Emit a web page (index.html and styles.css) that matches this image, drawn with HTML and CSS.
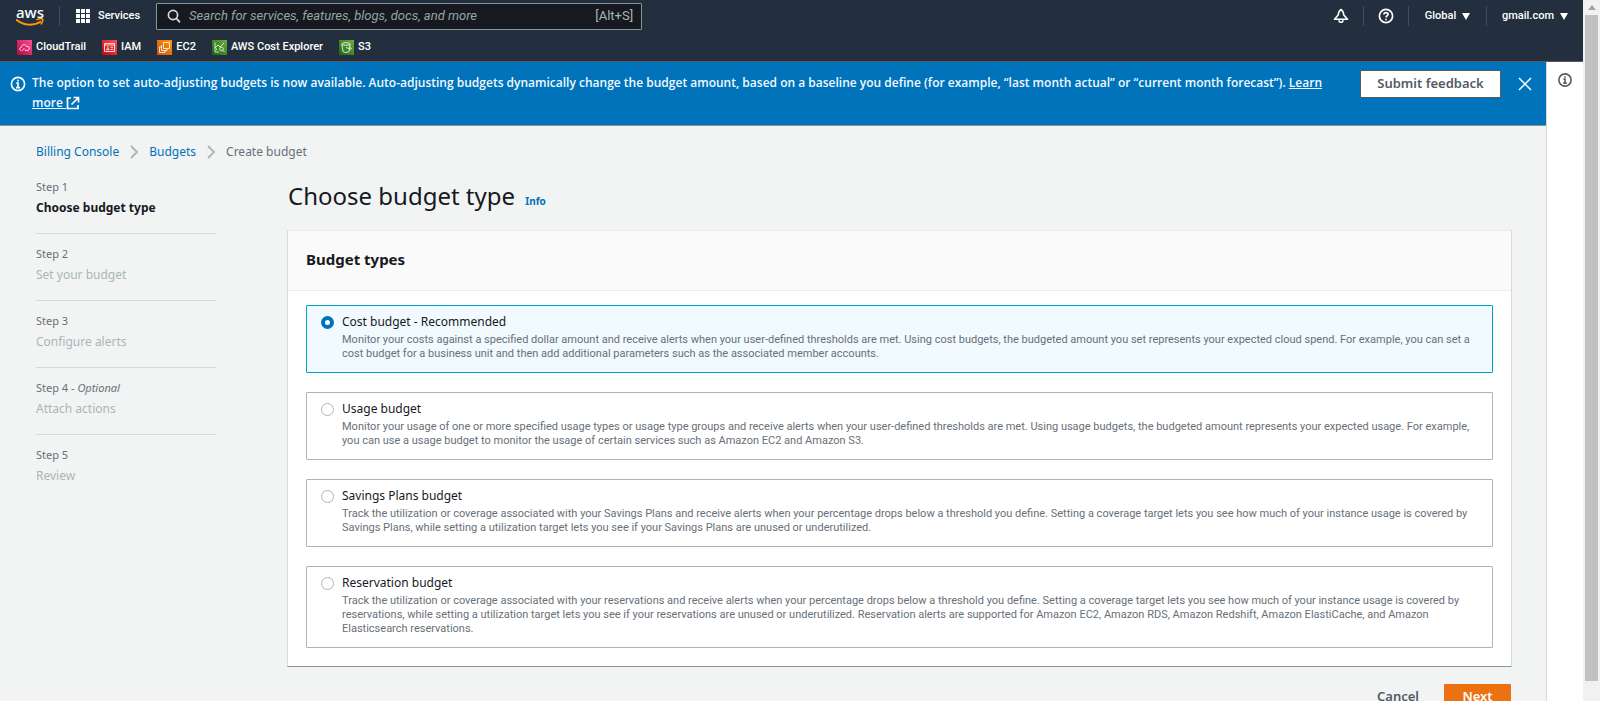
FILE: index.html
```
<!DOCTYPE html>
<html lang="en">
<head>
<meta charset="utf-8">
<title>Create budget</title>
<link rel="stylesheet" href="styles.css">
</head>
<body>
<div class="page">
  <header class="topbar">
    <div class="topbar-row">
      <a class="logo" href="#" aria-label="AWS home">
        <span class="logo-word">aws</span>
        <svg class="logo-smile" viewBox="0 0 28 9" width="28" height="9" aria-hidden="true"><path d="M0 1.500C8 8 18 8 25 3.500" fill="none" stroke="#f90" stroke-width="2"/><path d="M20.500 2c3-1.600 5.500-1.400 6-.8s0 3-1.600 5.300" fill="none" stroke="#f90" stroke-width="1.600"/></svg>
      </a>
      <button class="services" type="button">
        <svg width="14" height="14" viewBox="0 0 14 14" fill="#fff" aria-hidden="true"><path d="M0 0h4v4H0zM5 0h4v4H5zM10 0h4v4h-4zM0 5h4v4H0zM5 5h4v4H5zM10 5h4v4h-4zM0 10h4v4H0zM5 10h4v4H5zM10 10h4v4h-4z"/></svg>
        Services
      </button>
      <label class="search">
        <svg width="14" height="14" viewBox="0 0 14 14" fill="none" stroke="#d5dbdb" stroke-width="1.700" aria-hidden="true"><circle cx="6" cy="6" r="4.600"/><path d="M9.300 9.300l3.700 4"/></svg>
        <input type="search" placeholder="Search for services, features, blogs, docs, and more" aria-label="Search">
        <span class="shortcut">[Alt+S]</span>
      </label>
      <nav class="tools">
        <button type="button" aria-label="Notifications"><svg width="16" height="16" viewBox="0 0 16 16" fill="none" stroke="#fff" stroke-width="1.600" stroke-linejoin="round" aria-hidden="true"><path d="M8 1.500C6 2.500 5.500 4.500 5.200 7L1.500 11.300h13L10.800 7C10.500 4.500 10 2.500 8 1.500z"/><path d="M6 12.200a2 2 0 0 0 4 0"/></svg></button>
        <button type="button" aria-label="Help"><svg width="16" height="16" viewBox="0 0 16 16" fill="none" stroke="#fff" stroke-width="1.700" aria-hidden="true"><circle cx="8" cy="8" r="6.600"/><path d="M5.900 6.500C5.900 3.800 10.100 4 10.100 6.300 10.100 7.700 8 7.800 8 9.500M8 10.700v1.600"/></svg></button>
        <button type="button" class="menu-region">Global <svg width="8" height="7" viewBox="0 0 8 7" aria-hidden="true"><path d="M0 0h8L4 7z" fill="#fff"/></svg></button>
        <button type="button" class="menu-user">gmail.com <svg width="8" height="7" viewBox="0 0 8 7" aria-hidden="true"><path d="M0 0h8L4 7z" fill="#fff"/></svg></button>
      </nav>
    </div>
    <nav class="favorites">
      <a href="#"><svg class="tile pink" width="15" height="15" viewBox="0 0 15 15" aria-hidden="true"><path d="M4.500 10.500C2 10.500 2 7.500 4.300 7.500 4.500 4 9 3.800 9.600 6.500 12 6.200 13 7.500 12.300 9 12 10 11 10.500 9.500 10.500H8M5.500 10.500l1.500-2 1 1"/></svg>CloudTrail</a>
      <a href="#"><svg class="tile red" width="15" height="15" viewBox="0 0 15 15" aria-hidden="true"><path d="M2.500 3.500h10v8h-10zM2.500 5h10M4.500 9.800c0-2 2.500-2 2.500 0zM5 7h1.500M8.500 7.300h2.500M8.500 9.500h2.500"/></svg>IAM</a>
      <a href="#"><svg class="tile orange" width="15" height="15" viewBox="0 0 15 15" aria-hidden="true"><path d="M6.500 2.500h6v6h-6zM4.500 5v5.500h5.500v-2M4.500 7h-2v5.500H8v-2"/></svg>EC2</a>
      <a href="#"><svg class="tile green" width="15" height="15" viewBox="0 0 15 15" aria-hidden="true"><path d="M3 2.500v9.500h4M3 8l3-3 2 2 4-4M4.500 10V8.500"/><circle cx="9.500" cy="9" r="1.800"/><path d="M10.800 10.300l1.700 1.700"/></svg>AWS Cost Explorer</a>
      <a href="#"><svg class="tile green" width="15" height="15" viewBox="0 0 15 15" aria-hidden="true"><ellipse cx="7" cy="4" rx="4.200" ry="1.300"/><path d="M2.800 4l1.200 7.500c1 1.200 5 1.200 6 0L11.200 4M7 7.500l4.500 1.500c1.500.3 1-1-.7-1.800"/></svg>S3</a>
    </nav>
  </header>
  <div class="body">
    <main class="content">
      <section class="banner">
        <svg class="banner-icon" width="16" height="16" viewBox="0 0 16 16" fill="none" stroke="#fff" stroke-width="1.600" aria-hidden="true"><circle cx="8" cy="8" r="6.600"/><path d="M8 3.700v1.800M6.200 7H8v4.500M6 11.600h4"/></svg>
        <p class="banner-text">The option to set auto-adjusting budgets is now available. Auto-adjusting budgets dynamically change the budget amount, based on a baseline you define (for example, “last month actual” or “current month forecast”). <a href="#">Learn more <svg width="14" height="14" viewBox="0 0 14 14" fill="none" stroke="#fff" stroke-width="1.700" aria-hidden="true"><path d="M5 2H1.500v10.500H12V9M7.500 1.500h5v5M12.500 1.500L5.500 8.500"/></svg></a></p>
        <button class="feedback" type="button">Submit feedback</button>
        <button class="close" type="button" aria-label="Dismiss"><svg width="14" height="14" viewBox="0 0 14 14" fill="none" stroke="#fff" stroke-width="1.500" aria-hidden="true"><path d="M1 1l12 12M13 1L1 13"/></svg></button>
      </section>
      <nav class="breadcrumb">
        <a href="#">Billing Console</a>
        <svg width="8" height="14" viewBox="0 0 8 14" fill="none" stroke="#aab7b8" stroke-width="1.800" aria-hidden="true"><path d="M1 1l6 6-6 6"/></svg>
        <a href="#">Budgets</a>
        <svg width="8" height="14" viewBox="0 0 8 14" fill="none" stroke="#aab7b8" stroke-width="1.800" aria-hidden="true"><path d="M1 1l6 6-6 6"/></svg>
        <span>Create budget</span>
      </nav>
      <div class="wizard">
        <ol class="steps">
          <li class="current"><small>Step 1</small><span>Choose budget type</span></li>
          <li><small>Step 2</small><span>Set your budget</span></li>
          <li><small>Step 3</small><span>Configure alerts</span></li>
          <li><small>Step 4 - <i>Optional</i></small><span>Attach actions</span></li>
          <li><small>Step 5</small><span>Review</span></li>
        </ol>
        <form class="form">
          <h1>Choose budget type <a href="#">Info</a></h1>
          <section class="panel">
            <h2>Budget types</h2>
            <div class="options">
              <label class="option"><input type="radio" name="type" checked><span class="option-text"><b>Cost budget - Recommended</b><span>Monitor your costs against a specified dollar amount and receive alerts when your user-defined thresholds are met. Using cost budgets, the budgeted amount you set represents your expected cloud spend. For example, you can set a cost budget for a business unit and then add additional parameters such as the associated member accounts.</span></span></label>
              <label class="option"><input type="radio" name="type"><span class="option-text"><b>Usage budget</b><span>Monitor your usage of one or more specified usage types or usage type groups and receive alerts when your user-defined thresholds are met. Using usage budgets, the budgeted amount represents your expected usage. For example, you can use a usage budget to monitor the usage of certain services such as Amazon EC2 and Amazon S3.</span></span></label>
              <label class="option"><input type="radio" name="type"><span class="option-text"><b>Savings Plans budget</b><span>Track the utilization or coverage associated with your Savings Plans and receive alerts when your percentage drops below a threshold you define. Setting a coverage target lets you see how much of your instance usage is covered by Savings Plans, while setting a utilization target lets you see if your Savings Plans are unused or underutilized.</span></span></label>
              <label class="option"><input type="radio" name="type"><span class="option-text"><b>Reservation budget</b><span>Track the utilization or coverage associated with your reservations and receive alerts when your percentage drops below a threshold you define. Setting a coverage target lets you see how much of your instance usage is covered by reservations, while setting a utilization target lets you see if your reservations are unused or underutilized. Reservation alerts are supported for Amazon EC2, Amazon RDS, Amazon Redshift, Amazon ElastiCache, and Amazon Elasticsearch reservations.</span></span></label>
            </div>
          </section>
          <div class="actions">
            <button class="cancel" type="button">Cancel</button>
            <button class="next" type="submit">Next</button>
          </div>
        </form>
      </div>
    </main>
    <aside class="help">
      <button type="button" aria-label="Open help panel"><svg width="14" height="14" viewBox="0 0 16 16" fill="none" stroke="#545b64" stroke-width="1.800" aria-hidden="true"><circle cx="8" cy="8" r="7"/><path d="M8 3.700v1.800M6.200 7H8v4.500M6 11.600h4"/></svg></button>
    </aside>
  </div>
</div>
<div class="scrollbar" aria-hidden="true"><span class="scroll-arrow"></span><span class="scroll-thumb"></span></div>
</body>
</html>
```
FILE: styles.css
```
* { box-sizing: border-box; }
body {
  margin: 0;
  height: 100vh;
  display: flex;
  overflow: hidden;
  font-family: "Noto Sans", "Open Sans", sans-serif;
  font-size: 12px;
  line-height: 18px;
  color: #16191f;
  background: #fff;
}
button { font: inherit; color: inherit; background: none; border: 0; padding: 0; margin: 0; cursor: pointer; }
a { color: #0073bb; text-decoration: none; }
svg { flex: none; }
.page { flex: 1; min-width: 0; display: flex; flex-direction: column; }

.topbar { flex: none; background: #232f3e; color: #fff; border-bottom: 1px solid #545b64; font-family: Roboto, "Noto Sans", sans-serif; font-weight: 500; font-size: 11px; }
.topbar-row { display: flex; align-items: center; height: 32px; padding-left: 16px; }
.logo { display: flex; flex-direction: column; align-items: flex-start; width: 44px; height: 20px; border-right: 1px solid #414d5c; color: #fff; }
.logo-word { font-family: "Noto Sans", sans-serif; font-size: 15px; line-height: 12px; font-weight: 500; }
.logo-smile { display: block; }
.services { display: flex; align-items: center; gap: 8px; margin-left: 16px; }
.search { display: flex; align-items: center; gap: 8px; width: 486px; height: 27px; margin-left: 16px; padding: 0 8px 0 10px; background: #16191f; border: 1px solid #879596; border-radius: 1px; font-weight: 400; font-size: 13px; color: #aab7b8; }
.search input { flex: 1; min-width: 0; padding: 0; border: 0; outline: 0; background: none; font: inherit; color: #fff; }
.search input::placeholder { color: #95a5a6; font-style: italic; opacity: 1; }
.tools { display: flex; align-items: center; margin-left: auto; }
.tools button { display: flex; align-items: center; justify-content: center; gap: 6px; height: 20px; width: 45px; border-right: 1px solid #414d5c; }
.tools .menu-region { width: 78px; }
.tools .menu-user { width: 96px; border: 0; }
.favorites { display: flex; align-items: center; gap: 16px; height: 29px; padding: 1px 16px 0 17px; }
.favorites a { display: flex; align-items: center; gap: 4px; color: #fff; }
.tile { fill: none; stroke: #fff; stroke-width: 1; stroke-opacity: .8; }
.pink { background: linear-gradient(45deg, #b0084d, #ff4f8b); }
.red { background: linear-gradient(45deg, #bd0816, #ff5252); }
.orange { background: linear-gradient(45deg, #c8511b, #f90); }
.green { background: linear-gradient(45deg, #1b660f, #6cae3e); }

.body { flex: 1; min-height: 0; display: flex; }
.content { flex: 1; min-width: 0; overflow: hidden; background: #f2f3f3; border-right: 1px solid #d5dbdb; }
.banner { display: flex; align-items: flex-start; min-height: 64px; padding: 8px 8px 8px 10px; background: #0073bb; border-bottom: 1px solid #879596; color: #f1faff; }
.banner-icon { margin-top: 6px; }
.banner-text { flex: 1; margin: 3px 28px 0 6px; font-family: "Open Sans", "Noto Sans", sans-serif; font-weight: 600; line-height: 20px; }
.banner-text a { color: #f1faff; text-decoration: underline; }
.banner-text svg { vertical-align: -3px; }
.feedback { width: 141px; height: 28px; padding-bottom: 3px; background: #fff; border: 1px solid #545b64; color: #545b64; font-size: 13px; font-weight: 600; }
.close { display: flex; margin: 7px 6px 0 17px; }

.breadcrumb { display: flex; align-items: center; gap: 11px; padding: 17px 36px 0; color: #687078; }
.wizard { display: flex; align-items: flex-start; gap: 72px; padding: 18px 35px 0 36px; }
.steps { flex: none; width: 180px; margin: 0; padding: 0; list-style: none; }
.steps li { display: flex; flex-direction: column; gap: 3px; padding: 12px 0 15px; border-bottom: 1px solid #d5dbdb; color: #aab7b8; }
.steps li:first-child { padding-top: 0; }
.steps li:last-child { border: 0; }
.steps small { font-size: 11px; line-height: 16px; color: #687078; }
.steps span { line-height: 20px; }
.steps .current { color: #16191f; font-weight: 700; }
.steps .current small { font-weight: 400; }

.form { flex: 1; min-width: 0; }
h1 { margin: 0; font-size: 24px; line-height: 34px; font-weight: 400; }
h1 a { margin-left: 4px; font-size: 10px; font-weight: 700; }
.panel { margin: 12px -1px 0; background: #fff; border: 1px solid #d5dbdb; border-top-color: #eaeded; border-bottom-color: #879596; }
h2 { margin: 0; padding: 17px 18px 20px; background: #fafafa; border-bottom: 1px solid #eaeded; font-size: 15px; line-height: 22px; font-weight: 700; }
.options { display: flex; flex-direction: column; gap: 19px; padding: 14px 18px 18px; }
.option { display: flex; align-items: flex-start; gap: 8px; padding: 7px 14px 11px; border: 1px solid #aab7b8; border-radius: 1px; }
.option:has(:checked) { background: #f1faff; border-color: #00a1c9; }
.option input { appearance: none; flex: none; width: 13px; height: 13px; margin: 3px 0 0; border: 1px solid #aab7b8; border-radius: 50%; background: #fff; }
.option input:checked { border: 4px solid #0073bb; }
.option-text { display: flex; flex-direction: column; gap: 2px; }
.option-text b { font-size: 12px; font-weight: 400; }
.option-text span { font-family: Roboto, sans-serif; font-size: 11px; line-height: 14px; color: #687078; }
.actions { display: flex; justify-content: flex-end; gap: 8px; padding-top: 17px; font-size: 13px; font-weight: 600; }
.actions button { height: 28px; padding-bottom: 4px; }
.actions .cancel { padding: 0 17px 4px; color: #545b64; }
.next { width: 67px; background: #ec7211; color: #fff; border-radius: 1px; }

.help { flex: none; width: 36px; display: flex; justify-content: center; align-items: flex-start; padding-top: 11px; background: #fff; }
.help button { display: flex; }
.scrollbar { flex: none; width: 17px; display: flex; flex-direction: column; align-items: center; background: #f1f1f1; }
.scroll-arrow { margin: 5px 0; border: 4px solid transparent; border-top: 0; border-bottom-color: #a3a3a3; border-bottom-width: 5px; }
.scroll-thumb { width: 13px; height: 95%; background: #c1c1c1; }
```
